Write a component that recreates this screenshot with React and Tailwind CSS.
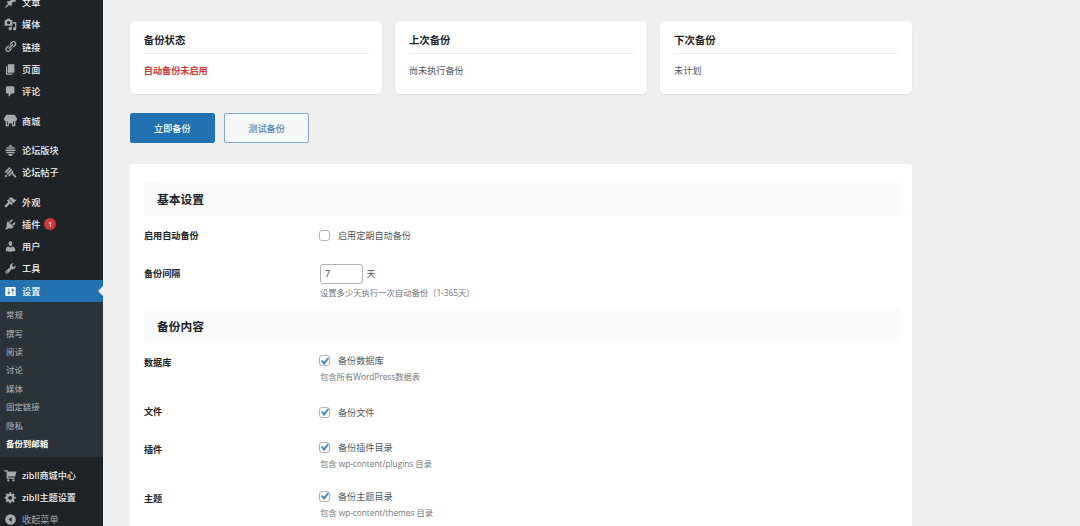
import clsx from 'clsx';

// dashicons, 20x20 grid
const ICONS = {
    post: 'M10.44 3.02l1.82-1.82 6.36 6.35-1.83 1.82c-1.05-.68-2.48-.57-3.41.36l-.75.75c-.92.93-1.04 2.35-.35 3.41l-1.83 1.82-2.41-2.41-2.8 2.79c-.42.42-3.38 2.71-3.8 2.29s1.86-3.39 2.28-3.81l2.79-2.79L4.1 9.36l1.83-1.82c1.05.69 2.48.57 3.4-.36l.75-.75c.93-.92 1.05-2.35.36-3.41z',
    media: 'M13 11V4c0-.55-.45-1-1-1h-1.67L9 1H5L3.67 3H2c-.55 0-1 .45-1 1v7c0 .55.45 1 1 1h10c.55 0 1-.45 1-1zM7 4.5c1.38 0 2.5 1.12 2.5 2.5S8.38 9.5 7 9.5 4.5 8.38 4.5 7 5.62 4.5 7 4.5zM14 6h5v10.5c0 1.38-1.12 2.5-2.5 2.5S14 17.88 14 16.5s1.12-2.5 2.5-2.5c.17 0 .34.02.5.05V9h-3V6zm-4 8.05V13h2v3.5c0 1.38-1.12 2.5-2.5 2.5S7 17.88 7 16.5 8.12 14 9.5 14c.17 0 .34.02.5.05z',
    links: 'M17.74 2.76c1.68 1.69 1.68 4.41 0 6.1l-1.53 1.52c-1.12 1.12-2.7 1.47-4.14 1.09l2.62-2.61.76-.77.76-.76c.84-.84.84-2.2 0-3.04-.84-.85-2.2-.85-3.04 0l-.77.76-3.38 3.38c-.37-1.44-.02-3.02 1.1-4.14l1.52-1.53c1.69-1.68 4.42-1.68 6.1 0zM8.59 13.43l5.34-5.34c.42-.42.42-1.1 0-1.52-.44-.43-1.13-.39-1.53 0l-5.33 5.34c-.42.42-.42 1.1 0 1.52.44.43 1.13.39 1.52 0zm-.76 2.29l4.14-4.15c.38 1.44.03 3.02-1.09 4.14l-1.52 1.53c-1.69 1.68-4.41 1.68-6.1 0-1.68-1.68-1.68-4.42 0-6.1l1.53-1.52c1.12-1.12 2.7-1.47 4.14-1.1l-4.14 4.15c-.85.84-.85 2.2 0 3.05.84.84 2.2.84 3.04 0z',
    page: 'M6 15V2h10v13H6zm-1 1h8v2H3V5h2v11z',
    comments: 'M5 2h9c1.1 0 2 .9 2 2v7c0 1.1-.9 2-2 2h-2l-5 5v-5H5c-1.1 0-2-.9-2-2V4c0-1.1.9-2 2-2z',
    store: 'M3.500 1h13L20 7v1.500c0 1.300-1 2.200-2.500 2.200v8.300h-5v-4.500h-5V19h-5v-8.300C1 10.700 0 9.800 0 8.500V7zM4.500 11.500v5h1.300v-5zM14.200 11.500v5h1.300v-5z',
    forums: 'M7 4.200c.5-2 1.500-2.700 3-2.700s2.500.7 3 2.700zM4.500 5h11c.7 0 1.200.5 1.200 1.200s-.5 1.200-1.200 1.200h-11c-.7 0-1.200-.5-1.200-1.200S3.800 5 4.500 5zM3 8.400h14c.7 0 1.200.5 1.200 1.200s-.5 1.200-1.200 1.200H3c-.7 0-1.200-.5-1.200-1.200S2.300 8.400 3 8.400zM4.500 11.800h11c.7 0 1.200.5 1.200 1.200s-.5 1.200-1.200 1.200h-11c-.7 0-1.200-.5-1.200-1.200s.5-1.200 1.200-1.200zM6.500 15.200h7c-.4 2.100-1.600 3.300-3.500 3.300s-3.100-1.200-3.500-3.300z',
    topics: 'M1 8.800L8.200 1.600l2 2L3 10.800zM3.700 11.600l7.300-7.300 2 2-7.300 7.300zM.8 15.500l2.300-2.300 2 2-2.300 2.300zM6.500 14.300l7-7 1.700 1.800-1.500 1.500 5.500 5.600-1.800 1.800-5.500-5.600-3.600 3.600z',
    appearance: 'M14.48 11.06L7.41 3.99l1.5-1.5c.5-.56 2.3-.47 3.51.32 1.21.8 1.43 1.28 2.91 2.1 1.18.64 2.45 1.26 4.45.85zm-.71.71L6.7 4.7 4.93 6.47c-.39.39-.39 1.02 0 1.41l1.06 1.06c.39.39.39 1.03 0 1.42-.6.6-1.43 1.11-2.21 1.69-.35.26-.7.53-1.01.84C1.43 14.23.4 16.08 1.4 17.07c.99 1 2.84-.03 4.18-1.36.31-.31.58-.66.85-1.02.57-.78 1.08-1.61 1.69-2.21.39-.39 1.02-.39 1.41 0l1.06 1.06c.39.39 1.02.39 1.41 0z',
    plugins: 'M13.11 4.36L9.87 7.6 8 5.73l3.24-3.24c.35-.34 1.05-.2 1.56.32.52.51.66 1.21.31 1.55zm-8 1.77l.91-1.12 9.01 9.01-1.19.84c-.71.71-2.63 1.16-3.82 1.16H6.14L4.9 17.26c-.59.59-1.54.59-2.12 0-.59-.58-.59-1.53 0-2.12l1.24-1.24v-3.88c0-1.13.4-3.19 1.09-3.89zm7.26 3.97l3.24-3.24c.34-.35 1.04-.21 1.55.31.52.51.66 1.21.31 1.55l-3.24 3.25z',
    users: 'M10 9.25c-2.27 0-2.73-3.44-2.73-3.44C7 4.02 7.82 2 9.97 2c2.16 0 2.98 2.02 2.71 3.81 0 0-.41 3.44-2.68 3.44zM7.230 10L10 11.820 12.72 10c2.39 0 4.52 2.33 4.52 4.53v2.49s-3.65 1.13-7.24 1.13c-3.65 0-7.24-1.13-7.24-1.13v-2.49c0-2.25 1.94-4.53 4.47-4.530z',
    tools: 'M16.68 9.77c-1.34 1.34-3.3 1.67-4.95.99l-5.41 6.52c-.99.99-2.59.99-3.58 0s-.99-2.59 0-3.57l6.52-5.42c-.68-1.65-.35-3.61.99-4.95 1.28-1.28 3.12-1.62 4.72-1.06l-2.89 2.89 2.82 2.82 2.86-2.87c.53 1.58.18 3.39-1.08 4.65zM3.81 16.21c.4.39 1.04.39 1.43 0 .4-.4.4-1.04 0-1.43-.39-.4-1.03-.4-1.43 0-.39.39-.39 1.03 0 1.43z',
    settings: 'M18 16V4c0-.55-.45-1-1-1H3c-.55 0-1 .45-1 1v12c0 .55.45 1 1 1h14c.55 0 1-.45 1-1zM8 11h1c.55 0 1 .45 1 1s-.45 1-1 1H8v1.5c0 .28-.22.5-.5.5s-.5-.22-.5-.5V13H6c-.55 0-1-.45-1-1s.45-1 1-1h1V5.5c0-.28.22-.5.5-.5s.5.22.5.5V11zm5-2h-1c-.55 0-1-.45-1-1s.45-1 1-1h1V5.5c0-.28.22-.5.5-.5s.5.22.5.5V7h1c.55 0 1 .45 1 1s-.45 1-1 1h-1v5.5c0 .28-.22.5-.5.5s-.5-.22-.5-.5V9z',
    cart: 'M1 2h4c.6 0 1 .4 1 1v1h13.500L17 11.500H6.500V13H16c.6 0 1 .4 1 1s-.4 1-1 1H5c-.6 0-1-.4-1-1V4H1c-.6 0-1-.4-1-1s.4-1 1-1zM6.500 15.800a1.700 1.700 0 1 1 0 3.400 1.700 1.700 0 0 1 0-3.400zM14.500 15.800a1.700 1.700 0 1 1 0 3.400 1.700 1.700 0 0 1 0-3.400z',
    generic: 'M18 12h-2.18c-.17.7-.44 1.35-.81 1.93l1.54 1.54-2.1 2.1-1.54-1.54c-.58.36-1.23.63-1.91.79V19H8v-2.18c-.68-.16-1.33-.43-1.91-.79l-1.54 1.54-2.12-2.12 1.54-1.54c-.36-.58-.63-1.23-.79-1.91H1V9.03h2.17c.16-.7.44-1.35.8-1.94L2.43 5.55l2.1-2.1 1.54 1.54c.58-.37 1.24-.64 1.93-.81V2h3v2.18c.68.16 1.33.43 1.91.79l1.54-1.54 2.12 2.12-1.54 1.54c.36.59.64 1.24.8 1.94H18V12zm-8.5 1.5c1.66 0 3-1.34 3-3s-1.34-3-3-3-3 1.34-3 3 1.34 3 3 3z',
    collapse: 'M10 1.800a8.200 8.200 0 1 0 0 16.400 8.200 8.200 0 0 0 0-16.400zM11.800 13.800L7.300 10l4.500-3.800z',
};

const MENU = [
    [
        { icon: 'post', label: '文章' },
        { icon: 'media', label: '媒体' },
        { icon: 'links', label: '链接' },
        { icon: 'page', label: '页面' },
        { icon: 'comments', label: '评论' },
    ],
    [{ icon: 'store', label: '商城' }],
    [
        { icon: 'forums', label: '论坛版块' },
        { icon: 'topics', label: '论坛帖子' },
    ],
    [
        { icon: 'appearance', label: '外观' },
        { icon: 'plugins', label: '插件', badge: 1 },
        { icon: 'users', label: '用户' },
        { icon: 'tools', label: '工具' },
        {
            icon: 'settings',
            label: '设置',
            active: true,
            children: ['常规', '撰写', '阅读', '讨论', '媒体', '固定链接', '隐私', '备份到邮箱'],
        },
    ],
    [
        { icon: 'cart', label: 'zibll商城中心' },
        { icon: 'generic', label: 'zibll主题设置' },
        { icon: 'collapse', label: '收起菜单', muted: true },
    ],
];

function Icon({ name, className }) {
    return (
        <svg viewBox="0 0 20 20" fill="currentColor" fillRule="evenodd" className={clsx('w-[13px] h-[13px] shrink-0', className)}>
            <path d={ICONS[name]} />
        </svg>
    );
}

function MenuItem({ item }) {
    return (
        <li>
            <a
                className={clsx(
                    'relative flex items-center h-[22.25px] pl-[3.5px] text-[9.15px] font-medium',
                    item.active ? 'bg-[#2271b1] text-white' : item.muted ? 'text-[#a7aaad]' : 'text-[#f0f0f1]'
                )}
            >
                <Icon name={item.icon} className={item.active ? 'text-white' : 'text-[#a7aaad]'} />
                <span className={clsx('ml-[5.5px] pt-[1px] whitespace-nowrap', item.muted && 'font-normal')}>{item.label}</span>
                {item.badge && (
                    <span className="ml-[4px] flex items-center justify-center w-[12px] h-[12px] rounded-full bg-[#d63638] text-white text-[7px] leading-none">
                        {item.badge}
                    </span>
                )}
                {item.active && (
                    <span className="absolute right-0 top-[6px] border-y-[5px] border-y-transparent border-r-[5px] border-r-[#efefef]" />
                )}
            </a>
            {item.children && (
                <ul className="bg-[#2c3338] pt-[4px] pb-[3.8px] text-[8.45px] text-[#b4b8bc]">
                    {item.children.map((label, i) => (
                        <li
                            key={label}
                            className={clsx(
                                'flex items-center h-[18.4px] pl-[6px] pt-[0.6px]',
                                i === item.children.length - 1 && 'font-bold text-white'
                            )}
                        >
                            {label}
                        </li>
                    ))}
                </ul>
            )}
        </li>
    );
}

function Sidebar() {
    return (
        <aside className="w-[102.5px] h-full shrink-0 overflow-hidden bg-[#1d2327]">
            <nav className="-mt-[8.7px] flex flex-col gap-[7.2px]">
                {MENU.map((group, i) => (
                    <ul key={i}>
                        {group.map((item) => (
                            <MenuItem key={item.label} item={item} />
                        ))}
                    </ul>
                ))}
            </nav>
        </aside>
    );
}

function StatusCard({ title, children, danger }) {
    return (
        <div className="h-[72.5px] pl-[13.7px] pr-[13px] pt-[10px] bg-white rounded-[5px] shadow-[0_1px_2px_rgba(0,0,0,0.08)]">
            <h3 className="h-[22.5px] border-b border-[#ececec] text-[10.4px] leading-[19px] font-bold text-[#1d2327]">{title}</h3>
            <p className={clsx('mt-[9px] text-[9.15px] leading-[16px]', danger ? 'font-bold text-[#d63638]' : 'text-[#50575e]')}>
                {children}
            </p>
        </div>
    );
}

function SectionTitle({ children }) {
    return (
        <h2 className="flex items-center h-[34.5px] pl-[13px] pt-[0.5px] rounded-[3px] bg-[#f8fafb] text-[11.75px] font-bold text-[#1d2327]">
            {children}
        </h2>
    );
}

function Row({ label, className, children }) {
    return (
        <div className={clsx('flex', className)}>
            <div className="w-[176px] shrink-0 pt-[11.7px] text-[9.15px] leading-[16px] font-bold text-[#1d2327]">{label}</div>
            <div className="text-[#50575e]">{children}</div>
        </div>
    );
}

function Check({ checked, children }) {
    return (
        <label className="-ml-[0.7px] flex items-center h-[15px] text-[9.15px]">
            <span className="flex items-center justify-center w-[11px] h-[11px] border border-[#b0b2b5] rounded-[3px] bg-white">
                {checked && (
                    <svg viewBox="4 3 14 13" className="w-[10px] h-[10px] shrink-0" fill="#3582c4" stroke="#3582c4" strokeWidth="0.6">
                        <path d="M14.83 4.89l1.340.94-5.81 8.380H9.02L5.78 9.67l1.340-1.250 2.570 2.400z" />
                    </svg>
                )}
            </span>
            <span className="ml-[7.7px] pt-[0.5px]">{children}</span>
        </label>
    );
}

function Hint({ children }) {
    return (
        <p className="text-[8.4px] leading-[17px] tracking-[-0.06px] text-[#72777c] whitespace-nowrap font-['Open_Sans','Noto_Sans_CJK_SC',sans-serif]">
            {children}
        </p>
    );
}

export default function App() {
    return (
        <div className="flex w-[1080px] h-[526px] overflow-hidden bg-[#efefef] font-['Noto_Sans','Noto_Sans_CJK_SC',sans-serif]">
            <Sidebar />
            <main className="ml-[27.6px] w-[782px] pt-[21px]">
                <div className="grid grid-cols-3 gap-[13.5px]">
                    <StatusCard title="备份状态" danger>自动备份未启用</StatusCard>
                    <StatusCard title="上次备份">尚未执行备份</StatusCard>
                    <StatusCard title="下次备份">未计划</StatusCard>
                </div>

                <div className="mt-[19.7px] flex gap-[9.5px] text-[9.15px] font-medium">
                    <button className="w-[84.5px] h-[30px] pt-[1px] rounded-[2px] border border-[#2271b1] bg-[#2271b1] text-white">立即备份</button>
                    <button className="w-[85px] h-[30px] pt-[1px] rounded-[2px] border border-[#7fa9d0] bg-[#f6f7f7] text-[#4f89bb]">测试备份</button>
                </div>

                <section className="mt-[20.8px] h-[400px] pl-[13.9px] pr-[12px] pt-[18px] bg-white rounded-[4px]">
                    <SectionTitle>基本设置</SectionTitle>
                    <Row label="启用自动备份" className="h-[37.5px]">
                        <div className="pt-[11.5px]">
                            <Check>启用定期自动备份</Check>
                        </div>
                    </Row>
                    <Row label="备份间隔" className="h-[55px]">
                        <div className="pt-[10px] flex items-center text-[9.15px]">
                            <input
                                type="text"
                                defaultValue="7"
                                className="w-[43px] h-[20px] px-[4px] rounded-[3px] border border-[#b0b2b5] bg-white text-[#50575e]"
                            />
                            <span className="ml-[3.5px] pt-[0.5px]">天</span>
                        </div>
                        <Hint>设置多少天执行一次自动备份（1-365天）</Hint>
                    </Row>

                    <SectionTitle>备份内容</SectionTitle>
                    <Row label="数据库" className="h-[49px]">
                        <div className="pt-[9.8px]">
                            <Check checked>备份数据库</Check>
                            <Hint>包含所有WordPress数据表</Hint>
                        </div>
                    </Row>
                    <Row label="文件" className="h-[37.5px]">
                        <div className="pt-[12.3px]">
                            <Check checked>备份文件</Check>
                        </div>
                    </Row>
                    <Row label="插件" className="h-[49px]">
                        <div className="pt-[9.8px]">
                            <Check checked>备份插件目录</Check>
                            <Hint>包含 wp-content/plugins 目录</Hint>
                        </div>
                    </Row>
                    <Row label="主题" className="h-[49px]">
                        <div className="pt-[9.8px]">
                            <Check checked>备份主题目录</Check>
                            <Hint>包含 wp-content/themes 目录</Hint>
                        </div>
                    </Row>
                </section>
            </main>
        </div>
    );
}
